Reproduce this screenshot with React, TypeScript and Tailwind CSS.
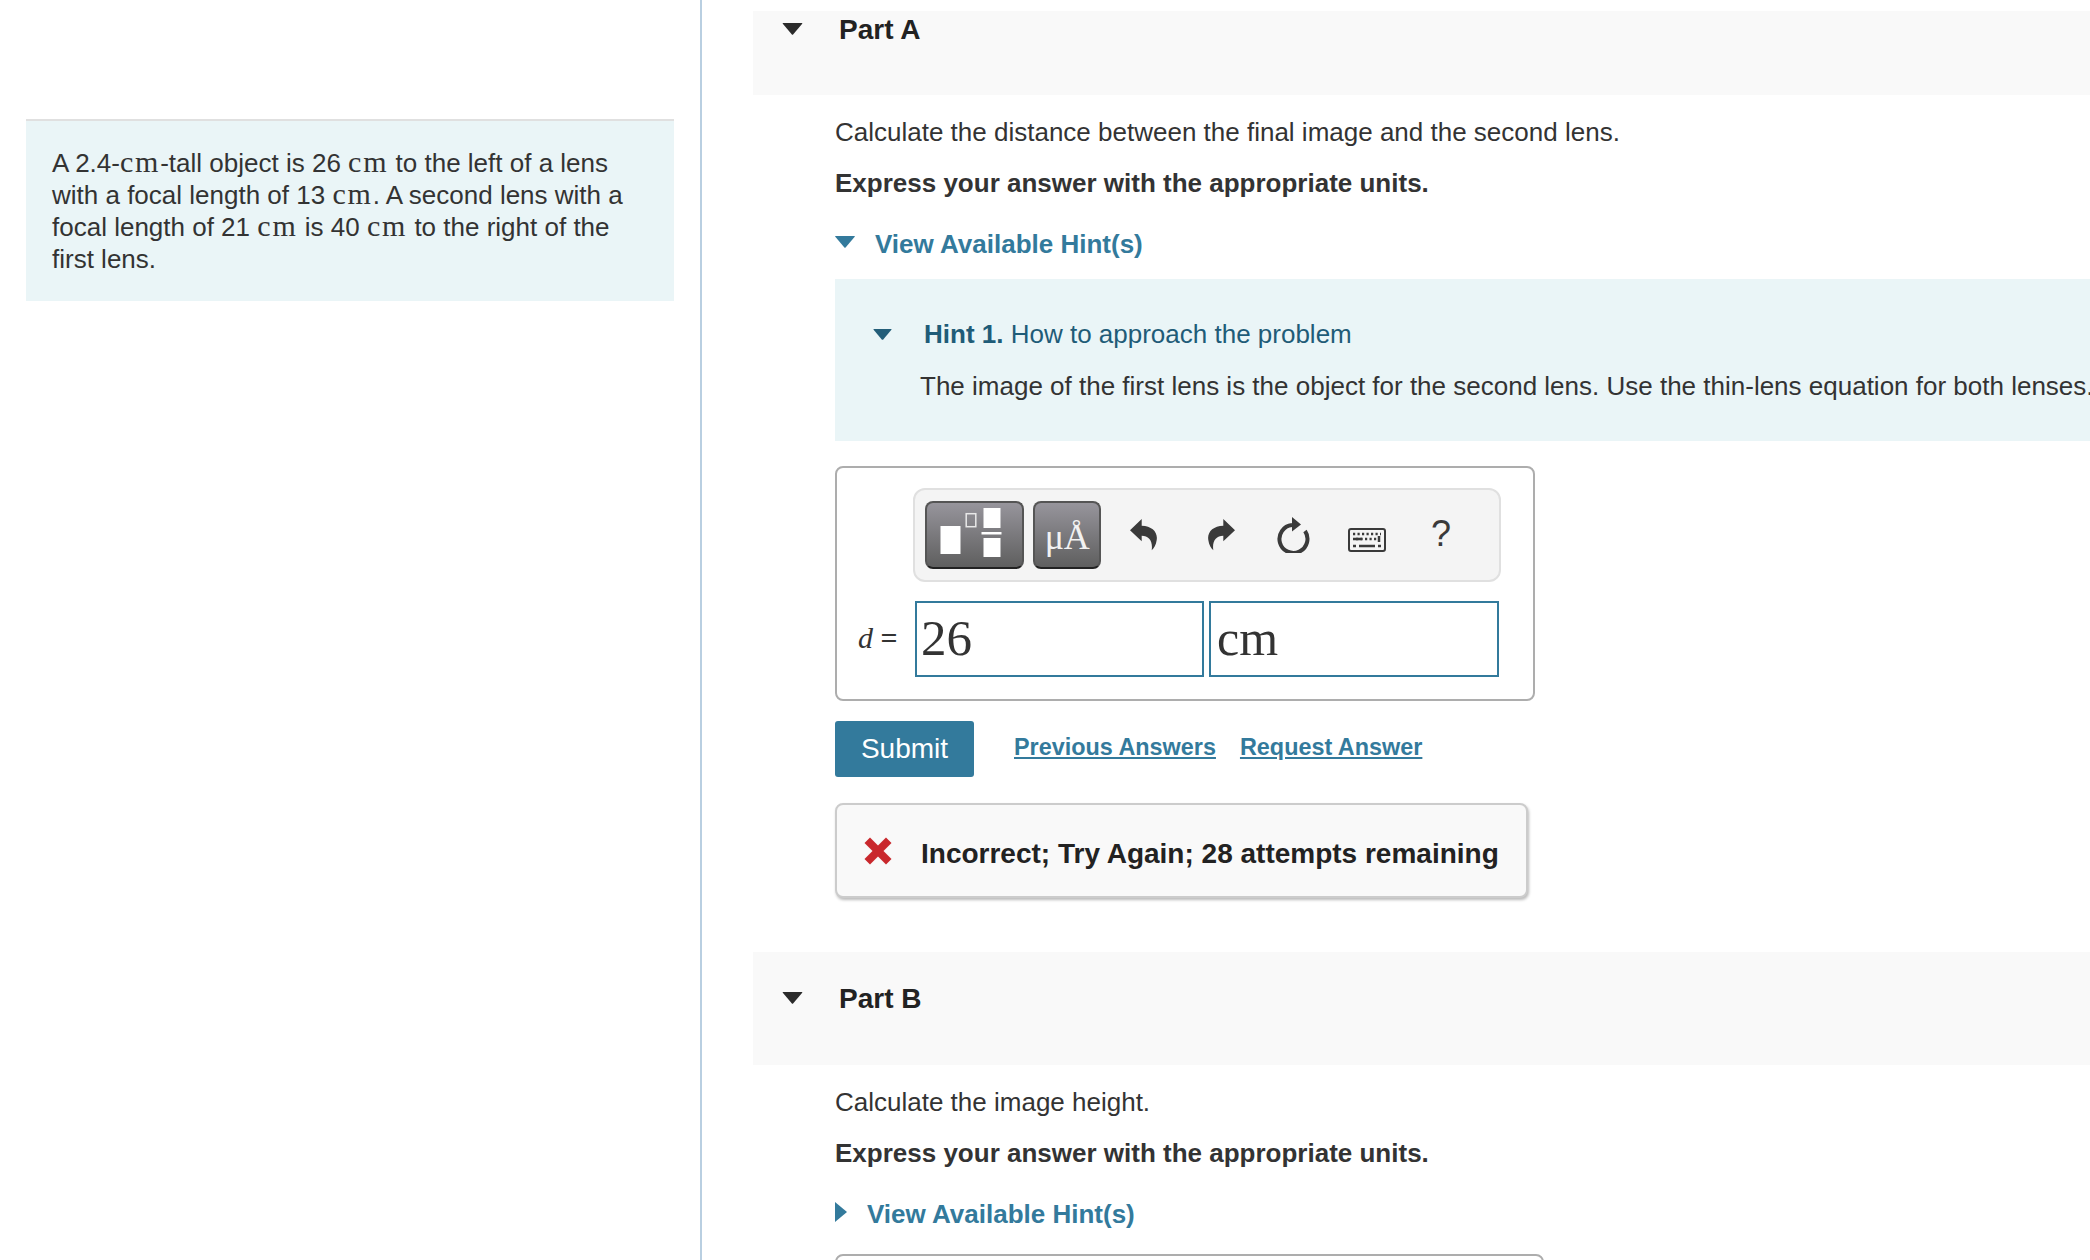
const sans = "font-['Liberation_Sans',Arial,sans-serif]";
const toolButton =
  "flex h-[68px] items-center justify-center rounded-[8px] border-2 border-[#555] border-b-[#222] bg-gradient-to-b from-[#97959c] to-[#5f5f5f]";

function Triangle({ className }: { className: string }) {
  return (
    <svg viewBox="0 0 20 12" className={className} fill="currentColor">
      <path d="M0.6 0 H19.4 Q20.2 0 19.7 0.8 L10.6 11.6 Q10 12 9.4 11.6 L0.3 0.8 Q-0.2 0 0.6 0 Z" />
    </svg>
  );
}

function Cm() {
  return <span className="font-['Liberation_Serif',serif] text-[30px] leading-[0] tracking-[1.8px]">cm</span>;
}

function PartHeader({ title, height }: { title: string; height: string }) {
  return (
    <div className={`flex items-start bg-[#f9f9f9] pl-[29px] ${height}`}>
      <Triangle className="mt-[11px] h-[12px] w-[21px] text-[#2b2b2b]" />
      <h2 className="ml-[36px] text-[28px] leading-[36px] font-bold text-[#222]">{title}</h2>
    </div>
  );
}

function Toolbar() {
  return (
    <div className="ml-[76px] flex h-[94px] w-[588px] items-center rounded-[12px] border-2 border-[#e0e0e0] bg-[#f4f4f4] pl-[10px]">
      <div className={`${toolButton} w-[99px]`}>
        <svg viewBox="2 2 94 64" className="h-[64px] w-[95px]">
          <rect x="15" y="25" width="20" height="28" fill="#fff" />
          <rect x="40.7" y="12.7" width="9.6" height="13" fill="none" stroke="#e8e8e8" strokeWidth="1.5" />
          <rect x="58" y="7" width="17" height="20" fill="#fff" />
          <rect x="56" y="31" width="20" height="2.5" fill="#fff" />
          <rect x="58" y="37" width="17" height="19" fill="#fff" />
        </svg>
      </div>
      <div
        className={`${toolButton} ml-[9px] w-[68px] pt-[4px] font-['Liberation_Serif',serif] text-[36px] leading-none tracking-[-0.5px] text-[#f2f2f2]`}
      >
        μÅ
      </div>
      <svg viewBox="0 0 27 32" className="ml-[29px] h-[32px] w-[27px]" fill="#3a3a3a">
        <path d="M0 11.3 L11.7 0 V6.7 C22 7 28 13 26.7 21 C26 26 24 29 21.7 31.3 C23 22 19 16.7 11.7 16.7 V22.3 Z" />
      </svg>
      <svg viewBox="0 0 27 32" className="ml-[51px] h-[32px] w-[27px]" fill="#3a3a3a">
        <path d="M27 11.3 L15.3 0 V6.7 C5 7 -1 13 0.3 21 C1 26 3 29 5.3 31.3 C4 22 8 16.7 15.3 16.7 V22.3 Z" />
      </svg>
      <svg viewBox="0 0 36 36" className="ml-[40px] h-[36px] w-[36px]" fill="none">
        <path d="M17 8 A14 14 0 1 0 30 14" stroke="#3a3a3a" strokeWidth="4" />
        <path d="M17 0 L26 7.5 L17 14.5 Z" fill="#3a3a3a" />
      </svg>
      <svg viewBox="0 0 38 24" className="ml-[37px] mt-[9px] h-[24px] w-[38px]">
        <rect x="1" y="1" width="36" height="22" rx="2" fill="#f4f4f4" stroke="#3a3a3a" strokeWidth="2" />
        <path d="M5 6 H33 M8 11 H30" stroke="#3a3a3a" strokeWidth="2.5" strokeDasharray="2.2 2.3" />
        <path d="M5 11 H14 M5 18 H8 M11 18 H27 M30 18 H33 M31 8 V14" stroke="#3a3a3a" strokeWidth="2.5" />
      </svg>
      <span className={`ml-[45px] mt-[-3px] text-[36px] leading-none text-[#3a3a3a] ${sans}`}>?</span>
    </div>
  );
}

function AnswerBox() {
  return (
    <div className="mt-[25px] h-[235px] w-[700px] rounded-[8px] border-2 border-[#adadad] pt-[20px]">
      <Toolbar />
      <div className="mt-[19px] flex items-center">
        <span className="ml-[21px] mb-[3px] w-[57px] font-['Liberation_Serif',serif] text-[30px] text-[#333]">
          <i>d</i> <span className="font-bold">=</span>
        </span>
        <div className="flex h-[76px] w-[289px] items-center border-2 border-[#337a9c] pb-[2px] pl-[4px] font-['Liberation_Serif',serif] text-[51px] text-[#333]">
          26
        </div>
        <div className="ml-[5px] flex h-[76px] w-[290px] items-center border-2 border-[#337a9c] pb-[2px] pl-[6px] font-['Liberation_Serif',serif] text-[50px] text-[#333]">
          cm
        </div>
      </div>
    </div>
  );
}

function Feedback() {
  return (
    <div className="mt-[26px] flex h-[95px] w-[693px] items-center rounded-[8px] border-2 border-[#ccc] bg-[#f9f9f9] pl-[27px] shadow-[1px_2px_3px_#bbb]">
      <svg viewBox="0 0 28 28" className="h-[28px] w-[28px]" fill="#c9282d">
        <path d="M6 0.5 L14 8.5 L22 0.5 L27.5 6 L19.5 14 L27.5 22 L22 27.5 L14 19.5 L6 27.5 L0.5 22 L8.5 14 L0.5 6 Z" />
      </svg>
      <span className="ml-[29px] mt-[6px] text-[28px] font-bold text-[#222]">
        Incorrect; Try Again; 28 attempts remaining
      </span>
    </div>
  );
}

export default function App() {
  return (
    <div className={`flex h-[1260px] w-full overflow-hidden bg-white text-[26px] text-[#333] ${sans}`}>
      <aside className="h-full w-[702px] shrink-0 border-r-2 border-[#b9cfe1] pt-[119px] pl-[26px]">
        <div className="h-[182px] w-[648px] border-t-2 border-[#e0e0e0] bg-[#eaf5f7] px-[26px] pt-[26px] text-[26px] leading-[32px]">
          A 2.4-<Cm />-tall object is 26 <Cm /> to the left of a lens with a focal length of 13 <Cm />. A second lens
          with a focal length of 21 <Cm /> is 40 <Cm /> to the right of the first lens.
        </div>
      </aside>
      <main className="min-w-0 flex-1 pl-[51px] pt-[11px]">
        <PartHeader title="Part A" height="h-[84px] pt-[1px]" />
        <div className="pl-[82px]">
          <p className="mt-[19px] leading-[36px]">Calculate the distance between the final image and the second lens.</p>
          <p className="mt-[15px] leading-[36px] font-bold">Express your answer with the appropriate units.</p>
          <div className="mt-[25px] flex items-start font-bold text-[#337a9c]">
            <Triangle className="mt-[10px] h-[12px] w-[20px]" />
            <span className="ml-[20px] leading-[36px]">View Available Hint(s)</span>
          </div>
          <div className="mt-[17px] h-[162px] overflow-hidden bg-[#eaf5f7] pt-[37px] whitespace-nowrap">
            <div className="flex items-start text-[#1f5c78]">
              <Triangle className="mt-[13px] ml-[38px] h-[11px] w-[19px] text-[#245e79]" />
              <span className="ml-[32px] leading-[36px]">
                <b>Hint 1.</b> How to approach the problem
              </span>
            </div>
            <p className="mt-[16px] ml-[85px] leading-[36px]">
              The image of the first lens is the object for the second lens. Use the thin-lens equation for both lenses.
            </p>
          </div>
          <AnswerBox />
          <div className="mt-[20px] flex h-[56px] items-center">
            <button className="h-[56px] w-[139px] rounded-[3px] bg-[#337a9c] text-[28px] text-white">Submit</button>
            <a className="ml-[40px] mt-[-2px] text-[23.4px] font-bold text-[#337a9c] underline">Previous Answers</a>
            <a className="ml-[24px] mt-[-2px] text-[23.4px] font-bold text-[#337a9c] underline">Request Answer</a>
          </div>
          <Feedback />
        </div>
        <div className="mt-[54px]">
          <PartHeader title="Part B" height="h-[113px] pt-[29px]" />
        </div>
        <div className="pl-[82px]">
          <p className="mt-[19px] leading-[36px]">Calculate the image height.</p>
          <p className="mt-[15px] leading-[36px] font-bold">Express your answer with the appropriate units.</p>
          <div className="mt-[25px] flex items-start font-bold text-[#337a9c]">
            <svg viewBox="0 0 12 20" className="mt-[6px] h-[20px] w-[12px]" fill="currentColor">
              <path d="M0 0 L12 10 L0 20 Z" />
            </svg>
            <span className="ml-[20px] leading-[36px]">View Available Hint(s)</span>
          </div>
          <div className="mt-[22px] h-[40px] w-[709px] rounded-t-[8px] border-2 border-[#adadad]" />
        </div>
      </main>
    </div>
  );
}
